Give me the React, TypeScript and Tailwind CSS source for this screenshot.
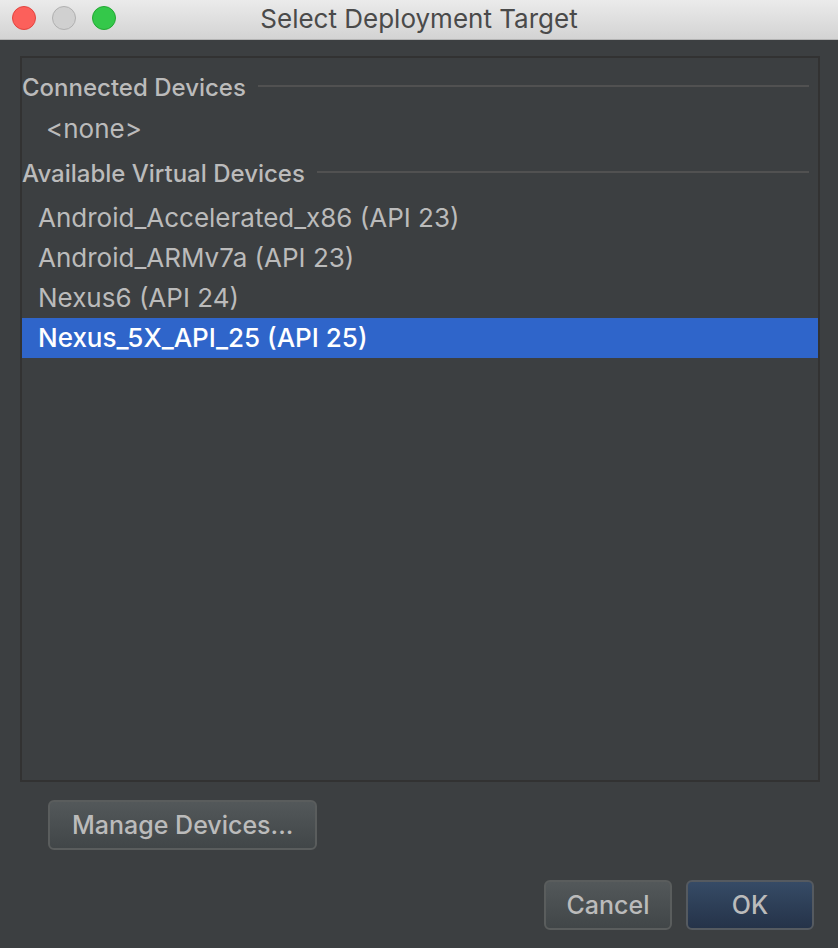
import { useState } from "react";
import clsx from "clsx";

const virtualDevices = [
  "Android_Accelerated_x86 (API 23)",
  "Android_ARMv7a (API 23)",
  "Nexus6 (API 24)",
  "Nexus_5X_API_25 (API 25)",
];

const TitleBar = () => (
  <header className="grid h-10 shrink-0 grid-cols-[1fr_auto_1fr] items-center border-b border-[#b4b4b4] bg-linear-to-b from-[#ebebeb] to-[#d3d3d3] px-3">
    <div className="flex gap-4 pb-1">
      <button
        aria-label="Close"
        className="size-6 rounded-full border border-[#e2443f] bg-[#fc605b]"
      />
      <button
        aria-label="Minimize"
        disabled
        className="size-6 rounded-full border border-[#b0b0b0] bg-[#d0d0d0]"
      />
      <button
        aria-label="Zoom"
        className="size-6 rounded-full border border-[#23a833] bg-[#34c84a]"
      />
    </div>
    <h1 className="pb-0.5 text-[26px] leading-8 font-normal text-[#4a4a4a]">
      Select Deployment Target
    </h1>
  </header>
);

const GroupHeader = ({ id, title }: { id: string; title: string }) => (
  <div className="flex h-10 items-center gap-3 pr-[9px]">
    <h2 id={id} className="pt-1 text-2xl">
      {title}
    </h2>
    <div className="h-0.5 flex-1 bg-[#515151]" />
  </div>
);

export default function App() {
  const [selected, setSelected] = useState(virtualDevices[3]);

  return (
    <div className="flex min-h-screen flex-col bg-[#3c3f41] font-['Inter',sans-serif] font-[450] text-[#bbbbbb]">
      <TitleBar />

      <main className="flex flex-1 flex-col py-4 pr-[18px] pl-5">
        <div className="flex-1 border-2 border-[#323232] pt-2">
          <section aria-labelledby="connected">
            <GroupHeader id="connected" title="Connected Devices" />
            <p className="h-[46px] pl-6 text-[26px] leading-[46px] font-normal">
              &lt;none&gt;
            </p>
          </section>

          <section>
            <GroupHeader id="virtual" title="Available Virtual Devices" />
            <div role="listbox" aria-labelledby="virtual" className="mt-1.5">
              {virtualDevices.map((device) => (
                <button
                  key={device}
                  role="option"
                  aria-selected={device === selected}
                  onClick={() => setSelected(device)}
                  className={clsx(
                    "block h-10 w-full px-4 text-left text-[26px] leading-10",
                    device === selected
                      ? "bg-[#2f65ca] text-white"
                      : "font-normal",
                  )}
                >
                  {device}
                </button>
              ))}
            </div>
          </section>
        </div>

        <div className="mt-[18px] px-7">
          <button className="h-[50px] rounded-md border-2 border-[#5a5d5d] bg-linear-to-b from-[#53585a] to-[#414648] px-[22px] pt-0.5 text-[25px]">
            Manage Devices...
          </button>
        </div>

        <footer className="mt-[30px] mb-0.5 flex justify-end gap-3.5 pr-1.5">
          <button className="h-[50px] w-32 rounded-md border-2 border-[#5a5d5d] bg-linear-to-b from-[#53585a] to-[#414648] pt-0.5 text-[25px]">
            Cancel
          </button>
          <button className="h-[50px] w-32 rounded-md border-2 border-[#555a60] bg-linear-to-b from-[#364b66] to-[#253349] pt-0.5 text-[25px]">
            OK
          </button>
        </footer>
      </main>
    </div>
  );
}
